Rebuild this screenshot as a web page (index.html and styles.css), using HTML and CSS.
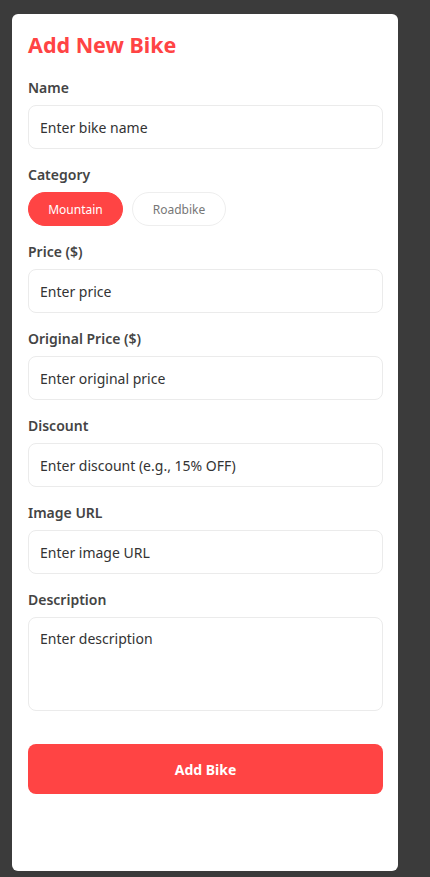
FILE: index.html
```html
<!DOCTYPE html>
<html>
<head>
<meta charset="utf-8">
<link rel="stylesheet" href="styles.css">
</head>
<body>
<div class="card">
  <h1 class="title">Add New Bike</h1>
  <div class="field">
    <label class="label">Name</label>
    <div class="input">Enter bike name</div>
  </div>
  <div class="field">
    <label class="label">Category</label>
    <div class="chips">
      <span class="chip active">Mountain</span>
      <span class="chip">Roadbike</span>
    </div>
  </div>
  <div class="field">
    <label class="label">Price ($)</label>
    <div class="input">Enter price</div>
  </div>
  <div class="field">
    <label class="label">Original Price ($)</label>
    <div class="input">Enter original price</div>
  </div>
  <div class="field">
    <label class="label">Discount</label>
    <div class="input">Enter discount (e.g., 15% OFF)</div>
  </div>
  <div class="field">
    <label class="label">Image URL</label>
    <div class="input">Enter image URL</div>
  </div>
  <div class="field">
    <label class="label">Description</label>
    <div class="input textarea">Enter description</div>
  </div>
  <button class="submit">Add Bike</button>
</div>
</body>
</html>
```
FILE: styles.css
```css
html, body {
  margin: 0;
  padding: 0;
  background: #3b3b3b;
}
body {
  padding: 14px 0 6px 12px;
  font-family: "Noto Sans", "Open Sans", sans-serif;
}
.card {
  box-sizing: border-box;
  width: 386px;
  height: 857px;
  background: #fff;
  border-radius: 6px;
  padding: 16px 15px 16px 16px;
  display: flex;
  flex-direction: column;
}
.title {
  margin: 0 0 18px;
  font-size: 21.5px;
  line-height: 30px;
  font-weight: 700;
  color: #ff4444;
}
.field {
  display: flex;
  flex-direction: column;
  margin-bottom: 16px;
}
.label {
  font-size: 14px;
  line-height: 20px;
  font-weight: 600;
  color: #444;
  margin-bottom: 7px;
}
.input {
  box-sizing: border-box;
  height: 44px;
  border: 1px solid #ebebeb;
  border-radius: 8px;
  padding: 0 11px;
  display: flex;
  align-items: center;
  font-size: 14px;
  color: #333;
}
.textarea {
  height: 94px;
  align-items: flex-start;
  padding-top: 11px;
}
.chips {
  display: flex;
  gap: 9px;
}
.chip {
  box-sizing: border-box;
  height: 34px;
  border-radius: 17px;
  border: 1px solid #eee;
  display: flex;
  align-items: center;
  justify-content: center;
  font-size: 12px;
  color: #777;
  width: 94px;
}
.chip.active {
  background: #ff4444;
  border-color: #ff4444;
  color: #fff;
  width: 95px;
}
.submit {
  margin-top: 17px;
  height: 50px;
  border: none;
  border-radius: 8px;
  background: #ff4444;
  color: #fff;
  font-family: inherit;
  font-size: 14px;
  font-weight: 700;
}
```
